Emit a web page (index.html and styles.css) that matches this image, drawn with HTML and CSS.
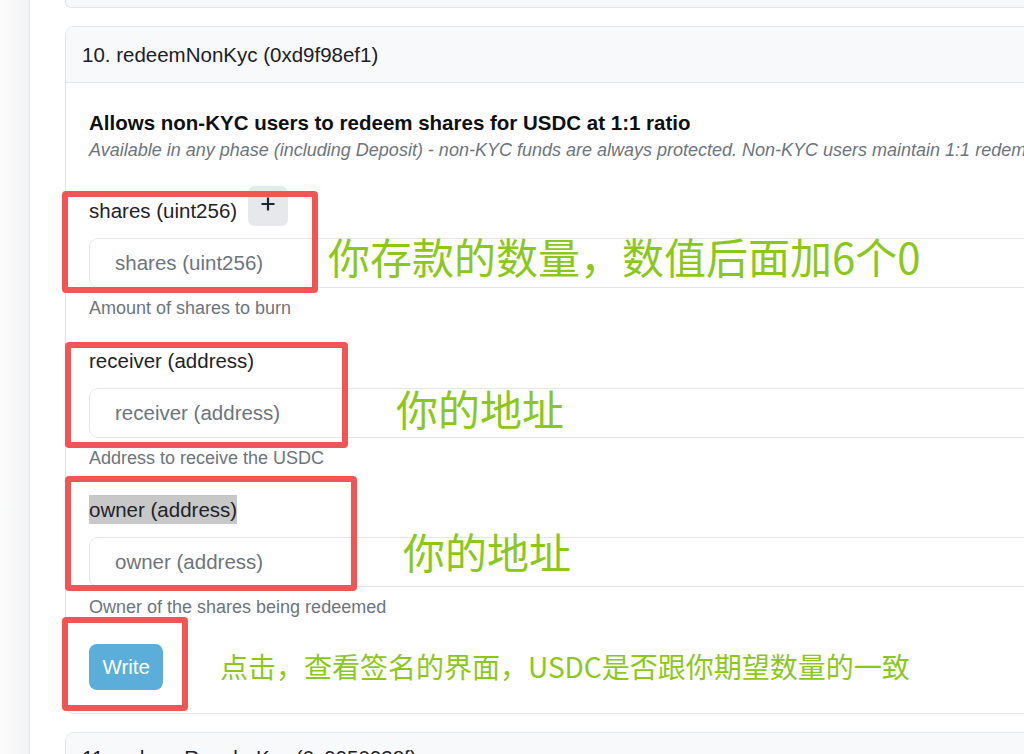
FILE: index.html
```html
<!DOCTYPE html>
<html lang="en">
<head>
<meta charset="utf-8">
<title>redeemNonKyc</title>
<link rel="stylesheet" href="styles.css">
</head>
<body>
<div class="page">
  <aside class="rail"></aside>
  <main class="main">
    <div class="card card-stub"></div>

    <section class="card">
      <header class="card-head">10. redeemNonKyc (0xd9f98ef1)</header>
      <div class="card-body">
        <h3 class="fn-title">Allows non-KYC users to redeem shares for USDC at 1:1 ratio</h3>
        <p class="fn-note">Available in any phase (including Deposit) - non-KYC funds are always protected. Non-KYC users maintain 1:1 redemption rights.</p>

        <div class="field">
          <div class="field-row">
            <label class="field-label">shares (uint256)</label>
            <button class="add-btn" type="button" aria-label="add">
              <svg width="14" height="14" viewBox="0 0 14 14"><path d="M7 0.5V13.5M0.5 7H13.5" stroke="#1e2533" stroke-width="2.2" fill="none"/></svg>
            </button>
          </div>
          <input class="field-input" type="text" placeholder="shares (uint256)">
          <div class="field-hint">Amount of shares to burn</div>
        </div>

        <div class="field">
          <div class="field-row">
            <label class="field-label">receiver (address)</label>
          </div>
          <input class="field-input" type="text" placeholder="receiver (address)">
          <div class="field-hint">Address to receive the USDC</div>
        </div>

        <div class="field">
          <div class="field-row">
            <label class="field-label"><span class="selected">owner (address)</span></label>
          </div>
          <input class="field-input" type="text" placeholder="owner (address)">
          <div class="field-hint">Owner of the shares being redeemed</div>
        </div>

        <button class="write-btn" type="button">Write</button>
      </div>
    </section>

    <section class="card">
      <header class="card-head card-head-top">11. redeemRegularKyc (0x9950938f)</header>
      <div class="card-body"></div>
    </section>
  </main>
</div>

<div class="mark box-shares"></div>
<div class="mark box-receiver"></div>
<div class="mark box-owner"></div>
<div class="mark box-write"></div>

<div class="note note-shares">你存款的数量，数值后面加6个0</div>
<div class="note note-receiver">你的地址</div>
<div class="note note-owner">你的地址</div>
<div class="note note-write">点击，查看签名的界面，USDC是否跟你期望数量的一致</div>
</body>
</html>
```

FILE: styles.css
```css
* { box-sizing: border-box; }

html, body {
  margin: 0;
  padding: 0;
  width: 1024px;
  height: 754px;
  overflow: hidden;
  background: #ffffff;
  font-family: "Liberation Sans", Arial, sans-serif;
  color: #1f2328;
}

body { position: relative; }

.page {
  display: flex;
  width: 1420px;
  min-height: 754px;
}

.rail {
  flex: 0 0 30px;
  background: linear-gradient(to right, #fbfbfb, #f3f4f5);
  border-right: 1px solid #e9eaec;
}

.main {
  flex: 1;
  padding: 0 36px 0 35px;
  background: #ffffff;
}

.card {
  border: 1px solid #e2e5e9;
  border-radius: 9px;
  background: #ffffff;
  overflow: hidden;
  margin-bottom: 18px;
}

.card-stub {
  height: 8px;
  border-top: none;
  border-radius: 0 0 6px 6px;
  background: #f6f7f9;
}

.card-head {
  height: 56px;
  display: flex;
  align-items: center;
  padding: 0 16px;
  background: #f8f9fa;
  border-bottom: 1px solid #e2e5e9;
  font-size: 20.5px;
  color: #1d2125;
}

.card-head-top {
  align-items: flex-start;
  padding-top: 13px;
}

.card-body {
  padding: 27px 23px 23px;
}

.fn-title {
  margin: 0;
  font-size: 20.5px;
  line-height: 25px;
  font-weight: 700;
  color: #0e0f11;
}

.fn-note {
  margin: 3px 0 23px;
  font-size: 18px;
  line-height: 25px;
  font-style: italic;
  color: #6c757d;
  white-space: nowrap;
}

.field {
  margin-bottom: 15.5px;
}

.field-row {
  height: 40px;
  display: flex;
  align-items: flex-end;
  gap: 11px;
}

.field-label {
  font-size: 20.5px;
  line-height: 25px;
  margin-bottom: 3px;
  color: #1f2328;
}

.selected {
  background: #c8c8c8;
  padding: 3px 0;
}

.add-btn {
  align-self: stretch;
  width: 40px;
  height: 40px;
  border: none;
  border-radius: 7px;
  background: #e6e8ec;
  display: flex;
  align-items: center;
  justify-content: center;
  padding: 0 0 4px;
}

.field-input {
  display: block;
  width: 100%;
  height: 50px;
  margin-top: 12px;
  padding: 0 25px;
  border: 1px solid #e4e6e9;
  border-radius: 9px;
  background: #ffffff;
  font-family: "Liberation Sans", Arial, sans-serif;
  font-size: 20.5px;
  color: #1f2328;
  outline: none;
}

.field-input::placeholder { color: #6c757d; }

.field-hint {
  margin-top: 8px;
  font-size: 18px;
  line-height: 24px;
  color: #6c757d;
}

.write-btn {
  display: block;
  margin-top: 25px;
  height: 46px;
  padding: 0 13.5px;
  border: none;
  border-radius: 8px;
  background: #5aaed9;
  color: #ffffff;
  font-family: "Liberation Sans", Arial, sans-serif;
  font-size: 20.5px;
}

/* annotation overlays */
.mark {
  position: absolute;
  border: 6.5px solid #f25555;
  border-radius: 4px;
}

.box-shares   { left: 62px; top: 191px; width: 256px; height: 102px; }
.box-receiver { left: 65px; top: 342px; width: 283px; height: 106px; }
.box-owner    { left: 65px; top: 476px; width: 292px; height: 115px; }
.box-write    { left: 62px; top: 617px; width: 126px; height: 94px; }

.note {
  position: absolute;
  font-family: "Noto Sans CJK SC", "Noto Sans", sans-serif;
  color: #8cc81c;
  line-height: 1;
  white-space: nowrap;
}

.note-shares   { left: 328px; top: 235px; font-size: 42px; }
.note-receiver { left: 396px; top: 387px; font-size: 42px; }
.note-owner    { left: 403px; top: 530px; font-size: 42px; }
.note-write    { left: 220px; top: 652px; font-size: 28px; }
```
